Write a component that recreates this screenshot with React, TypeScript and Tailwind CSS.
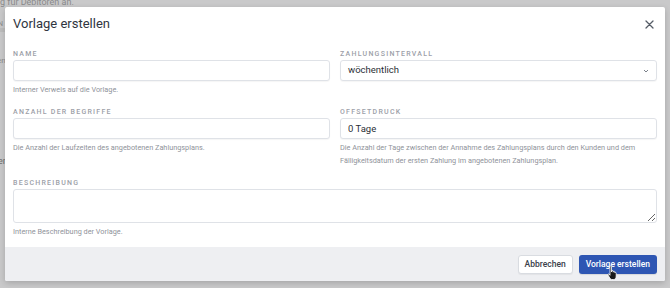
import React from 'react';

const Label: React.FC<{ children: React.ReactNode }> = ({ children }) => (
  <label className="block text-[7px] leading-[9px] font-medium tracking-[0.18em] uppercase text-[#9ca0a8] mb-[1px]">
    {children}
  </label>
);

const Help: React.FC<{ children: React.ReactNode }> = ({ children }) => (
  <p className="mt-[2px] text-[7.3px] leading-[13px] text-[#8f939a]">{children}</p>
);

const inputCls =
  'block w-full h-[21px] rounded-[3px] border border-[#dfe2e7] bg-white px-[7px] text-[9.5px] text-[#2b2f36] shadow-[0_1px_1px_rgba(0,0,0,0.04)] outline-none';

const App: React.FC = () => {
  return (
    <div className="relative w-[670px] h-[288px] overflow-hidden bg-[#c9c9ca] font-['Roboto',sans-serif]">
      {/* page behind the overlay */}
      <p className="absolute left-0 top-[-4px] text-[9px] text-[#8a8a8a]">g für Debitoren an.</p>
      <div className="absolute left-0 top-[28px] w-[5px] h-[4px] bg-[#bdbdbd]" />
      <p className="absolute left-[-2px] top-[19px] text-[7px] text-[#8a8a8a]">N</p>
      <p className="absolute left-[-3px] top-[55px] text-[8px] text-[#8a8a8a]">en</p>
      <p className="absolute left-[-2px] top-[155px] text-[9px] text-[#6f6f6f]">er</p>

      {/* Modal */}
      <div className="absolute left-[5px] top-[7px] w-[660px] h-[274px] bg-white rounded-[2px] shadow-[0_2px_6px_rgba(0,0,0,0.18)] flex flex-col overflow-hidden">
        {/* Header */}
        <div className="flex items-center justify-between px-[8px] pt-[4px] h-[30px]">
          <h2 className="text-[13px] font-normal text-[#30363f]">Vorlage erstellen</h2>
          <button className="mr-[3px] text-[#555c66]">
            <svg width="9" height="9" viewBox="0 0 9 9" fill="none" stroke="currentColor" strokeWidth="1.3" strokeLinecap="round">
              <path d="M1 1L8 8M8 1L1 8" />
            </svg>
          </button>
        </div>

        {/* Body */}
        <div className="grid grid-cols-2 gap-x-[10px] gap-y-[12px] px-[8px] pt-[13px]">
          <div>
            <Label>Name</Label>
            <input className={inputCls} />
            <Help>Interner Verweis auf die Vorlage.</Help>
          </div>
          <div>
            <Label>Zahlungsintervall</Label>
            <div className={`${inputCls} flex items-center justify-between`}>
              <span>wöchentlich</span>
              <svg width="6" height="4" viewBox="0 0 6 4" fill="none" stroke="#7b818a" strokeWidth="1">
                <path d="M1 1L3 3L5 1" />
              </svg>
            </div>
          </div>
          <div>
            <Label>Anzahl der Begriffe</Label>
            <input className={inputCls} />
            <Help>Die Anzahl der Laufzeiten des angebotenen Zahlungsplans.</Help>
          </div>
          <div>
            <Label>Offsetdruck</Label>
            <input className={inputCls} defaultValue="0 Tage" />
            <Help>
              Die Anzahl der Tage zwischen der Annahme des Zahlungsplans durch den Kunden und dem
              <br />
              Fälligkeitsdatum der ersten Zahlung im angebotenen Zahlungsplan.
            </Help>
          </div>
          <div className="col-span-2">
            <Label>Beschreibung</Label>
            <textarea className="block w-full h-[34px] mt-[1px] rounded-[3px] border border-[#dfe2e7] bg-white px-[7px] text-[10px] outline-none" />
            <Help>Interne Beschreibung der Vorlage.</Help>
          </div>
        </div>

        {/* Footer */}
        <div className="mt-auto h-[34px] bg-[#eeeff2] flex items-center justify-end gap-[6px] px-[8px]">
          <button className="h-[19px] px-[6px] rounded-[3px] border border-[#d9dce1] bg-white text-[8.5px] font-medium text-[#3b414b] shadow-[0_1px_1px_rgba(0,0,0,0.05)]">
            Abbrechen
          </button>
          <button className="h-[19px] px-[7px] rounded-[3px] bg-[#2e56b3] text-[8.5px] font-medium text-white shadow-[0_1px_1px_rgba(0,0,0,0.1)]">
            Vorlage erstellen
          </button>
        </div>
      </div>

      {/* mouse cursor */}
      <svg className="absolute left-[607px] top-[265px]" width="11" height="16" viewBox="0 0 11 16">
        <path
          d="M3 1.5c0-.8 1.5-.8 1.5 0V7l.3-1c.2-.8 1.4-.6 1.4.2v1l.2-.6c.3-.7 1.4-.5 1.4.3v.9c.3-.7 1.4-.5 1.4.3V11c0 2-1 3.5-2.5 3.5H5c-1 0-1.6-.6-2.2-1.5L1 10c-.4-.7.4-1.4 1-.8L3 10.3z"
          fill="#1a1a1a"
          stroke="#fff"
          strokeWidth="0.8"
        />
      </svg>
    </div>
  );
};

export default App;
